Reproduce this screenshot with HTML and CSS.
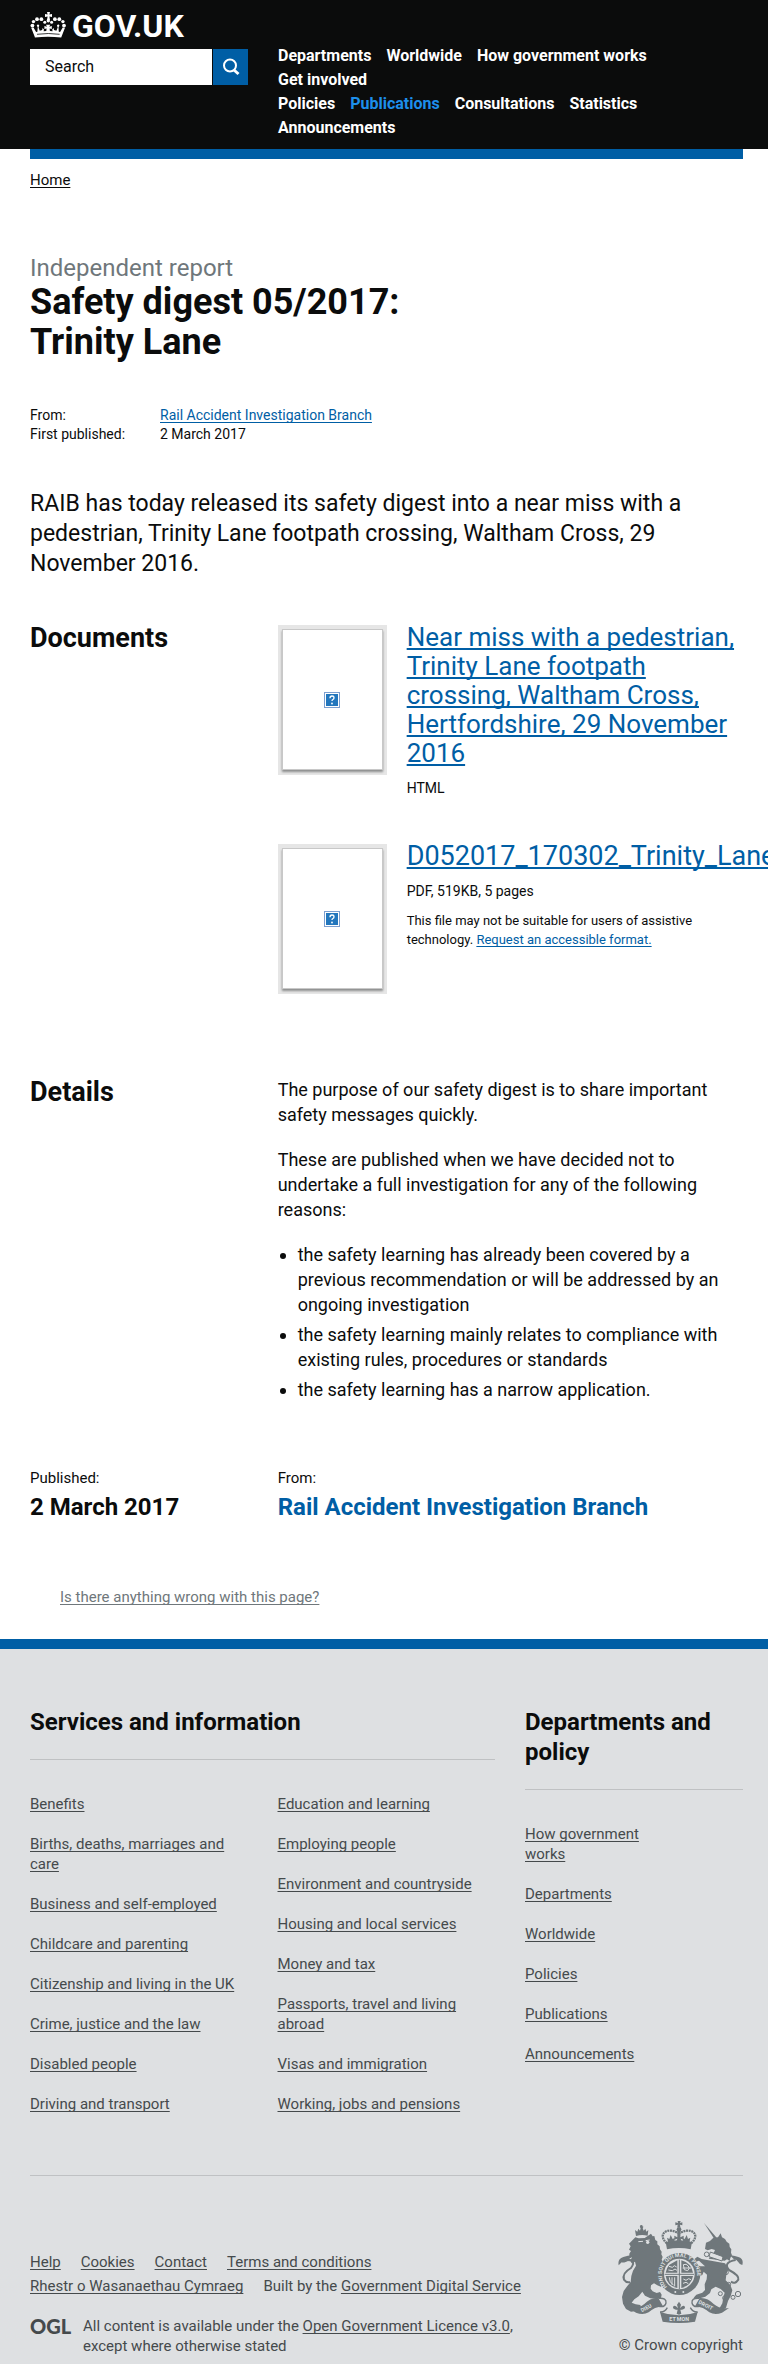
FILE: index.html
```html
<!DOCTYPE html>
<html lang="en">
<head>
<meta charset="utf-8">
<meta name="viewport" content="width=device-width, initial-scale=1">
<title>Safety digest 05/2017: Trinity Lane - GOV.UK</title>
<link rel="stylesheet" href="styles.css">
</head>
<body>
<header class="site-header">
  <a class="logo" href="#">
    <svg class="logo-crown" viewBox="0 0 36 26" aria-hidden="true">
      <g fill="currentColor">
        <path d="M17 0h3l-.6 2.600 2.600-.6v3l-2.600-.5.6 3.500h-3l.6-3.500-2.600.5v-3l2.600.6z"/>
        <circle cx="18.300" cy="8.700" r="1.700"/>
        <circle cx="2.400" cy="13.600" r="1.900"/><circle cx="3.500" cy="9.600" r="1.700"/><circle cx="7" cy="7.200" r="1.900"/><circle cx="11.400" cy="7.200" r="1.900"/><circle cx="14.800" cy="10.300" r="1.500"/>
        <circle cx="34" cy="13.600" r="1.900"/><circle cx="32.900" cy="9.600" r="1.700"/><circle cx="29.300" cy="7.200" r="1.900"/><circle cx="24.900" cy="7.200" r="1.900"/><circle cx="21.600" cy="10.300" r="1.500"/>
        <path d="M5 25.500 1.200 15.800l2.300-.3 2.600 4.500 1.300-.3.300-4.500-1-1.700 1.300-1.200 1.300 1.200-.8 1.900 1.300 3.300 2.400-.8.300-2 1.500 1.500-.4 1.900 2.700-.4.300-2.500-2.200.6v-3l2.500.7-.9-2h4.200l-.9 2 2.500-.7v3l-2.200-.6.300 2.500 2.700.4-.4-1.900 1.500-1.500.300 2 2.400.8 1.300-3.300-.8-1.900 1.300-1.200 1.300 1.200-1 1.700.3 4.500 1.300.3 2.600-4.500 2.300.3-3.800 9.700q-13.300-1.600-26.600 0z"/>
      </g>
      <path d="M7 22.300q11.300-1.600 22.600 0" fill="none" stroke="#0b0c0c" stroke-width=".8"/>
    </svg>
    <span>GOV.UK</span>
  </a>
  <div class="header-row">
    <form class="search" role="search">
      <input class="search-box" type="search" placeholder="Search" aria-label="Search">
      <button class="search-button" type="submit" aria-label="Search">
        <svg viewBox="0 0 18 18" width="18" height="18" fill="none" stroke="#fff" stroke-width="2" aria-hidden="true"><circle cx="8" cy="7.500" r="6"/><path d="m12 12 4.500 4" stroke-width="3"/></svg>
      </button>
    </form>
    <nav class="site-nav" aria-label="Site">
      <ul class="nav-list">
        <li><a href="#">Departments</a></li>
        <li><a href="#">Worldwide</a></li>
        <li><a href="#">How government works</a></li>
        <li><a href="#">Get involved</a></li>
      </ul>
      <ul class="nav-list">
        <li><a href="#">Policies</a></li>
        <li><a class="active" href="#">Publications</a></li>
        <li><a href="#">Consultations</a></li>
        <li><a href="#">Statistics</a></li>
        <li><a href="#">Announcements</a></li>
      </ul>
    </nav>
  </div>
</header>

<div class="page">
  <div class="header-bar"></div>
  <nav class="breadcrumb" aria-label="Breadcrumb"><a href="#">Home</a></nav>
  <main>
    <p class="doc-type">Independent report</p>
    <h1 class="title">Safety digest 05/2017: Trinity Lane</h1>
    <dl class="meta">
      <dt>From:</dt><dd><a href="#">Rail Accident Investigation Branch</a></dd>
      <dt>First published:</dt><dd>2 March 2017</dd>
    </dl>
    <p class="lead">RAIB has today released its safety digest into a near miss with a pedestrian, Trinity Lane footpath crossing, Waltham Cross, 29 November 2016.</p>

    <section class="block">
      <h2 class="block-title">Documents</h2>
      <div class="attachments">
        <article class="attachment">
          <a class="thumb" href="#" aria-label="Near miss with a pedestrian">
            <span class="paper"><svg class="missing" viewBox="0 0 16 16" aria-hidden="true"><rect x=".5" y=".5" width="15" height="15" fill="#fff" stroke="#7c9fd0"/><rect x="2" y="2" width="12" height="12" fill="#2377bd"/><path d="M6 6.200q0-2.200 2-2.200t2 1.800q0 1.200-1.100 1.700-.9.400-.9 1.500" fill="none" stroke="#fff" stroke-width="1.300"/><circle cx="8" cy="11.500" r=".9" fill="#fff"/></svg></span>
          </a>
          <div class="attachment-text">
            <h3 class="attachment-title"><a href="#">Near miss with a pedestrian, Trinity Lane footpath crossing, Waltham Cross, Hertfordshire, 29 November 2016</a></h3>
            <p class="attachment-meta">HTML</p>
          </div>
        </article>
        <article class="attachment">
          <a class="thumb" href="#" aria-label="D052017_170302_Trinity_Lane">
            <span class="paper"><svg class="missing" viewBox="0 0 16 16" aria-hidden="true"><rect x=".5" y=".5" width="15" height="15" fill="#fff" stroke="#7c9fd0"/><rect x="2" y="2" width="12" height="12" fill="#2377bd"/><path d="M6 6.200q0-2.200 2-2.200t2 1.800q0 1.200-1.100 1.700-.9.400-.9 1.500" fill="none" stroke="#fff" stroke-width="1.300"/><circle cx="8" cy="11.500" r=".9" fill="#fff"/></svg></span>
          </a>
          <div class="attachment-text">
            <h3 class="attachment-title long"><a href="#">D052017_170302_Trinity_Lane</a></h3>
            <p class="attachment-meta">PDF, 519KB, 5 pages</p>
            <p class="attachment-note">This file may not be suitable for users of assistive technology. <a href="#">Request an accessible format.</a></p>
          </div>
        </article>
      </div>
    </section>

    <section class="block details">
      <h2 class="block-title">Details</h2>
      <div class="prose">
        <p>The purpose of our safety digest is to share important safety messages quickly.</p>
        <p>These are published when we have decided not to undertake a full investigation for any of the following reasons:</p>
        <ul class="bullets">
          <li>the safety learning has already been covered by a previous recommendation or will be addressed by an ongoing investigation</li>
          <li>the safety learning mainly relates to compliance with existing rules, procedures or standards</li>
          <li>the safety learning has a narrow application.</li>
        </ul>
      </div>
    </section>

    <dl class="summary">
      <div><dt>Published:</dt><dd>2 March 2017</dd></div>
      <div><dt>From:</dt><dd><a href="#">Rail Accident Investigation Branch</a></dd></div>
    </dl>
  </main>
  <p class="report"><a href="#">Is there anything wrong with this page?</a></p>
</div>

<footer class="footer">
  <div class="footer-categories">
    <section>
      <h2 class="footer-title">Services and information</h2>
      <div class="footer-columns">
        <ul class="footer-list">
          <li><a href="#">Benefits</a></li>
          <li><a href="#">Births, deaths, marriages and care</a></li>
          <li><a href="#">Business and self-employed</a></li>
          <li><a href="#">Childcare and parenting</a></li>
          <li><a href="#">Citizenship and living in the UK</a></li>
          <li><a href="#">Crime, justice and the law</a></li>
          <li><a href="#">Disabled people</a></li>
          <li><a href="#">Driving and transport</a></li>
        </ul>
        <ul class="footer-list">
          <li><a href="#">Education and learning</a></li>
          <li><a href="#">Employing people</a></li>
          <li><a href="#">Environment and countryside</a></li>
          <li><a href="#">Housing and local services</a></li>
          <li><a href="#">Money and tax</a></li>
          <li class="short"><a href="#">Passports, travel and living abroad</a></li>
          <li><a href="#">Visas and immigration</a></li>
          <li><a href="#">Working, jobs and pensions</a></li>
        </ul>
      </div>
    </section>
    <section>
      <h2 class="footer-title">Departments and policy</h2>
      <ul class="footer-list narrow">
        <li><a href="#">How government works</a></li>
        <li><a href="#">Departments</a></li>
        <li><a href="#">Worldwide</a></li>
        <li><a href="#">Policies</a></li>
        <li><a href="#">Publications</a></li>
        <li><a href="#">Announcements</a></li>
      </ul>
    </section>
  </div>
  <div class="footer-meta">
    <div class="footer-info">
      <ul class="meta-links">
        <li><a href="#">Help</a></li>
        <li><a href="#">Cookies</a></li>
        <li><a href="#">Contact</a></li>
        <li><a href="#">Terms and conditions</a></li>
      </ul>
      <ul class="meta-links">
        <li><a href="#">Rhestr o Wasanaethau Cymraeg</a></li>
        <li>Built by the <a href="#">Government Digital Service</a></li>
      </ul>
      <div class="licence">
        <span class="ogl">OGL</span>
        <p>All content is available under the <a href="#">Open Government Licence v3.0</a>, except where otherwise stated</p>
      </div>
    </div>
    <a class="copyright" href="#">
      <svg class="crest" viewBox="54 33 375 306" aria-hidden="true">
        <defs><path id="garter" d="M201 231A53 53 0 1 1 276 231"/></defs>
        <g fill="#6f777b">
          <path d="M106 82l10 3 18-1 8-5 11-8 5 8 5-1 3 12 6 4 0 9 7 6 1 9 5 7-1 8 4 8-3 8 6 10-3 10 6 12-5 24-8 8 3 18-12-5-10-6-9 6-1 10 6 8 12 5 10-3 5 8-2 10-14 3-18-2-16-8-8-12-11 14-13 9-8 10 12 5 14 2 3 10-9 7-22 3-15-8-9-16-3-20 5-18 11-15 10-12 2-18 5-16 9-15-3-12-10 5-4-8 5-10-8 1 0-12 5-8-6-4 5-10-5-8z"/>
          <path d="M108 78l-3-18 7 5 3-9 5 6 2-8-3-4h12l-3 4 3 8 5-6 3 9 6-5-2 17q-18-5-35 1z"/>
          <circle cx="124" cy="49" r="4"/>
          <path d="M56 166q-4-20 14-25 12-4 31-6-6 7-13 11l8 3q-10 1-17 6-10 4-14 2z"/>
          <path d="M312 39l38 44-7 4z"/>
          <path d="M318 98l12-5 10-10 14-1 8-12 4 12 9 5 5 8 8 6 1 10 5 7-1 10 3 8-5 8-2 9-8-5-7 4-48-6 6-8 9-9 4-9-10-3-12 4-8-4z"/>
          <path d="M325 151l50 9 10 16-6 18-2 17 14 14 6 16-5 17-8 15-6 20-12 6-7-5 8-14 3-18 4-14-12-11-15-7-13 8-4 11-14 11-22 6-13-3 8-9 18-6 8-8-1-17 6-15 1-14-10-9-4 10-12 5-2-6 6-14-8-5-12-9 4-5 18 8 14 0-18-17-11 3-6-5 12-10 13 7z"/>
          <path d="M427 165q5-19-12-24-8-3-26-6l12 12q10 2 13 8 6 10 13 10z"/>
          <path d="M197 96q40-10 79 0l-4 22q-35-8-71 0z"/>
          <path d="M233 33h9l-2 6 7-2v9l-7-2 1 8h-9l1-8-7 2v-9l8 2z"/><circle cx="237" cy="58" r="7"/>
          <path d="M232 58h10l-1 24 10-5v12l-9-3 4 12h-18l4-12-9 3V77l9 5zM205 98l-4-15 7 4 4-12 6 12 7-4-3 16zM251 98l-4-15 7 4 6-12 4 12 7-4-3 16z"/>
          <circle cx="238" cy="192" r="63"/>
        </g>
        <g fill="none" stroke="#6f777b" stroke-width="6">
          <path d="M75 150Q112 148 93 174 65 190 72 209 80 220 90 216"/>
          <path d="M407 150Q368 157 387 180 418 196 415 209 405 224 393 215"/>
          <path d="M201 100C170 74 201 49 234 69M273 100C304 74 273 49 240 69" stroke-width="7" stroke-dasharray="6 2"/>
        </g>
        <circle cx="238" cy="192" r="46" fill="#dee0e2"/>
        <g fill="#6f777b">
          <path d="M208 164l24-13v37h-35q2-14 11-24zM244 151q30 8 35 37h-35zM197 198h35v36q-31-7-35-36zM244 198h35q-5 29-35 36z"/>
        </g>
        <g fill="none" stroke="#dee0e2" stroke-width="3">
          <path d="M207 169l10 3 6-5 7 4M205 180l12 2 8-5 6 4M250 164q9-4 15 4t-2 14l-10-3zM248 174h26M250 207l8 4 8-5 7 3M249 220l9-3 7 4M208 202q-1 15 13 24M216 202v22M224 202v27"/>
        </g>
        <path d="M194 193h88M238 149v88" stroke="#6f777b" stroke-width="3"/>
        <text class="crest-text"><textPath href="#garter">HONI SOIT QUI MAL Y PENSE</textPath></text>
        <circle cx="226" cy="246" r="3" fill="#dee0e2"/><circle cx="250" cy="246" r="3" fill="#dee0e2"/>
        <g fill="none" stroke="#6f777b" stroke-width="3"><circle cx="320" cy="133" r="7"/><circle cx="378" cy="187" r="7"/><circle cx="386" cy="223" r="6"/><circle cx="361" cy="251" r="6"/><circle cx="375" cy="264" r="7"/><circle cx="399" cy="262" r="6"/><circle cx="414" cy="252" r="8"/></g>
        <path d="M331 126l38 14-3 13-39-13z" fill="#dee0e2" stroke="#6f777b" stroke-width="3"/>
        <circle cx="143" cy="97" r="5" fill="#dee0e2"/><path d="M115 95l14-1M137 92l12-2" stroke="#dee0e2" stroke-width="3"/>
        <g fill="#6f777b">
          <path d="M87 294q28 4 46-12 18-20 42-18l14 25q-26 2-43 18-17 9-38 1z"/>
          <path d="M387 294q-28 4-46-12-18-20-42-18l-14 25q26 2 43 18 17 9 38 1z"/>
          <path d="M180 306q57 20 113 0l-8 29q-48 8-97 0z"/>
          <path d="M237 275l6 9-3 11 6-6q8-5 9 3 0 6-9 7h-5l3 12-7 3-7-3 3-12h-5q-9-1-9-7 1-8 9-3l6 6-3-11z"/>
        </g>
        <path d="M176 265q24-2 22 14-3 14-22 10M180 306q15 1 22-13M298 265q-24-2-22 14 3 14 22 10M293 306q-15 1-22-13" fill="none" stroke="#6f777b" stroke-width="4"/>
        <g class="crest-text">
          <text x="208" y="333">ET MON</text>
          <text x="126" y="307" transform="rotate(-29 126 307)">DIEU</text>
          <text x="294" y="280" transform="rotate(27 294 280)">DROIT</text>
        </g>
      </svg>
      <span>© Crown copyright</span>
    </a>
  </div>
</footer>
</body>
</html>
```
FILE: styles.css
```css
* { box-sizing: border-box; }

body {
  margin: 0;
  overflow-x: hidden;
  background: #fff;
  color: #0b0c0c;
  font-family: Roboto, "Liberation Sans", sans-serif;
  font-size: 16px;
  line-height: 20px;
}

h1, h2, h3, p, ul, dl, dd { margin: 0; padding: 0; }
ul { list-style: none; }
a { color: #005ea5; text-decoration-skip-ink: none; text-underline-offset: 2px; }

.site-header {
  background: #0b0c0c;
  padding: 11px 25px 9px 30px;
}
.logo {
  display: flex;
  gap: 6px;
  width: max-content;
  color: #fff;
  font-size: 32px;
  font-weight: 700;
  line-height: 30px;
  text-decoration: none;
}
.logo-crown { width: 36px; height: 26px; margin-top: 1px; }
.header-row {
  display: grid;
  grid-template-columns: 218px 1fr;
  column-gap: 30px;
}
.search { display: flex; gap: 1px; height: 36px; margin-top: 8px; }
.search-box {
  flex: 1;
  min-width: 0;
  padding: 0 15px;
  border: 0;
  border-radius: 0;
  background: #fff;
  color: #0b0c0c;
  font: inherit;
  appearance: none;
}
.search-box::placeholder { color: #0b0c0c; opacity: 1; }
.search-button {
  display: flex;
  align-items: center;
  justify-content: center;
  width: 35px;
  padding: 0;
  border: 0;
  background: #005ea5;
}
.site-nav { padding-top: 3px; line-height: 24px; font-weight: 700; }
.nav-list { display: flex; flex-wrap: wrap; column-gap: 15px; }
.nav-list a { color: #fff; text-decoration: none; }
.nav-list .active { color: #1d8feb; }

.page { padding: 0 25px 0 30px; }
.header-bar { height: 10px; background: #005ea5; }
.breadcrumb { padding-top: 11px; font-size: 15px; }
.breadcrumb a { color: #0b0c0c; }

.doc-type { margin-top: 64px; color: #6f777b; font-size: 24px; line-height: 28px; }
.title { max-width: 465px; font-size: 36px; line-height: 40px; }
.meta {
  display: grid;
  grid-template-columns: 130px 1fr;
  margin-top: 44px;
  font-size: 14px;
  line-height: 19px;
}
.lead { margin-top: 45px; font-size: 23px; line-height: 30px; }

.block {
  display: grid;
  grid-template-columns: 1fr 2fr;
  column-gap: 15px;
  margin-top: 44px;
}
.block-title { font-size: 27px; line-height: 30px; }
.attachments { display: grid; gap: 44px; min-width: 0; }
.attachment { display: grid; grid-template-columns: 109px 1fr; column-gap: 20px; align-items: start; }
.attachment-text { min-width: 0; }
.thumb {
  display: flex;
  height: 150px;
  margin-top: 2px;
  padding: 4px 4px 5px;
  background: #e6e6e6;
}
.paper {
  display: flex;
  flex: 1;
  align-items: center;
  justify-content: center;
  border: 1px solid #c8c8c8;
  background: #fff;
  box-shadow: 0 2px 2px rgba(11, 12, 12, .4);
}
.missing { width: 16px; height: 16px; }
.attachment-title { font-size: 26px; font-weight: 400; line-height: 29px; }
.attachment-title.long { font-size: 27px; }
.attachment-meta { margin-top: 11px; font-size: 14px; line-height: 19px; }
.attachment-note { margin-top: 10px; font-size: 13px; line-height: 19px; }

.details { margin-top: 83px; }
.prose { font-size: 18px; line-height: 25px; }
.prose p { margin-bottom: 20px; }
.bullets { padding-left: 20px; list-style: disc; }
.bullets li + li { margin-top: 5px; }

.summary {
  display: grid;
  grid-template-columns: 1fr 2fr;
  column-gap: 15px;
  margin-top: 66px;
  font-size: 15px;
}
.summary dd { margin-top: 4px; font-size: 24px; font-weight: 700; line-height: 30px; }
.summary a { text-decoration: none; }
.report { margin: 65px 0 32px; padding-left: 30px; font-size: 15px; }
.report a { color: #6f777b; }

.footer {
  padding: 58px 25px 8px 30px;
  border-top: 10px solid #005ea5;
  background: #dee0e2;
  color: #454a4c;
  font-size: 15px;
}
.footer a { color: #454a4c; }
.footer-categories {
  display: grid;
  grid-template-columns: 465px 1fr;
  column-gap: 30px;
  padding-bottom: 61px;
  border-bottom: 1px solid #bfc1c3;
}
.footer-title {
  padding-bottom: 22px;
  margin-bottom: 34px;
  border-bottom: 1px solid #bfc1c3;
  color: #0b0c0c;
  font-size: 24px;
  line-height: 30px;
}
.footer-columns { display: grid; grid-template-columns: 1fr 1fr; column-gap: 30px; }
.footer-list { display: grid; gap: 20px; align-content: start; }
.footer-list .short { max-width: 200px; }
.footer-list li { max-width: 218px; }
.narrow { max-width: 140px; }

.footer-meta { display: flex; justify-content: space-between; padding-top: 45px; }
.footer-info { padding-top: 29px; }
.meta-links { display: flex; flex-wrap: wrap; column-gap: 20px; line-height: 24px; }
.licence { display: flex; gap: 12px; margin-top: 18px; }
.licence p { max-width: 460px; }
.ogl { width: 41px; font-family: Lato, sans-serif; font-size: 20px; font-weight: 900; line-height: 20px; }
.footer .copyright { display: grid; gap: 12px; justify-items: end; align-content: start; text-decoration: none; white-space: nowrap; }
.crest { display: block; width: 125px; height: 102px; }
.crest-text { fill: #dee0e2; font-family: Roboto, sans-serif; font-size: 16px; font-weight: 700; }
```
